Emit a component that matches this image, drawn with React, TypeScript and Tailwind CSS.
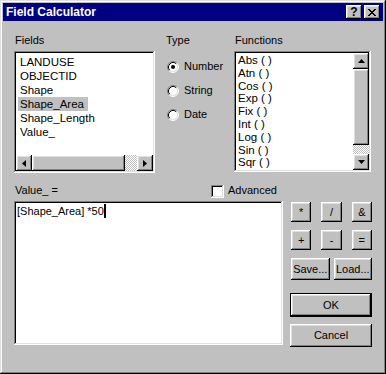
import React from "react";

const raised =
  "bg-[#c0c0c0] shadow-[inset_-1px_-1px_#000,inset_1px_1px_#fff,inset_-2px_-2px_#808080,inset_2px_2px_#dfdfdf]";
const sunken =
  "bg-white shadow-[inset_-1px_-1px_#fff,inset_1px_1px_#808080,inset_-2px_-2px_#dfdfdf,inset_2px_2px_#000]";
const dither =
  "bg-[conic-gradient(#fff_25%,#c0c0c0_0_50%,#fff_0_75%,#c0c0c0_0)] bg-[length:2px_2px]";

const closeGlyph = [
  "XX....XX",
  ".XX..XX.",
  "..XXXX..",
  "...XX...",
  "..XXXX..",
  ".XX..XX.",
  "XX....XX",
];

function CloseIcon() {
  return (
    <svg width="8" height="7" shapeRendering="crispEdges">
      {closeGlyph.map((row, y) =>
        row.split("").map((c, x) =>
          c === "X" ? <rect key={`${x}-${y}`} x={x} y={y} width="1" height="1" fill="#000" /> : null
        )
      )}
    </svg>
  );
}

function Arrow({ dir }: { dir: "left" | "right" | "up" | "down" }) {
  const pts = {
    left: "4,0 0,3.5 4,7",
    right: "0,0 4,3.5 0,7",
    up: "0,4 3.5,0 7,4",
    down: "0,0 7,0 3.5,4",
  }[dir];
  const vertical = dir === "up" || dir === "down";
  return (
    <svg width={vertical ? 7 : 4} height={vertical ? 4 : 7}>
      <polygon points={pts} fill="#000" />
    </svg>
  );
}

function Radio({ checked, label }: { checked?: boolean; label: string }) {
  return (
    <div className="flex items-center h-[13px]">
      <svg width="12" height="12" className="shrink-0">
        <circle cx="6" cy="6" r="5" fill="#fff" />
        <path d="M2.11 9.89 A5.5 5.5 0 0 1 9.89 2.11" stroke="#808080" fill="none" />
        <path d="M9.89 2.11 A5.5 5.5 0 0 1 2.11 9.89" stroke="#fff" fill="none" />
        <path d="M2.82 9.18 A4.5 4.5 0 0 1 9.18 2.82" stroke="#000" fill="none" />
        <path d="M9.18 2.82 A4.5 4.5 0 0 1 2.82 9.18" stroke="#dfdfdf" fill="none" />
        {checked && <circle cx="6" cy="6" r="2" fill="#000" />}
      </svg>
      <span className="ml-[5px]">{label}</span>
    </div>
  );
}

const fields = ["LANDUSE", "OBJECTID", "Shape", "Shape_Area", "Shape_Length", "Value_"];
const functions = ["Abs ( )", "Atn ( )", "Cos ( )", "Exp ( )", "Fix ( )", "Int ( )", "Log ( )", "Sin ( )", "Sqr ( )"];

export default function App() {
  return (
    <div className="w-[386px] h-[374px] bg-[#c0c0c0] p-[3px] flex flex-col text-[11px] leading-[13px] text-black font-['Liberation_Sans',Arial,sans-serif] shadow-[inset_-1px_-1px_#000,inset_1px_1px_#dfdfdf,inset_-2px_-2px_#808080,inset_2px_2px_#fff]">
      {/* Title bar */}
      <div className="h-[18px] bg-[#000080] flex items-center pl-[3px] pr-[3px]">
        <span className="flex-1 text-white font-bold text-[12px]">Field Calculator</span>
        <div className={`${raised} w-[16px] h-[14px] flex items-center justify-center font-bold text-[12px] leading-[12px]`}>
          ?
        </div>
        <div className={`${raised} w-[16px] h-[14px] ml-[2px] flex items-center justify-center`}>
          <CloseIcon />
        </div>
      </div>

      {/* Body */}
      <div className="flex-1 pl-[11px] pr-[11px] pt-[13px]">
        <div className="flex">
          {/* Fields */}
          <div className="w-[141px]">
            <div className="h-[17px] pl-[1px]">Fields</div>
            <div className={`${sunken} h-[122px] p-[2px] flex flex-col`}>
              <div className="flex-1 pt-[2px] leading-[14px] text-[11.5px] overflow-hidden">
                {fields.map((f) => (
                  <div key={f}>
                    <span className={`inline-block ml-[2px] pl-[2px] pr-[4px] ${f === "Shape_Area" ? "bg-[#c0c0c0]" : ""}`}>
                      {f}
                    </span>
                  </div>
                ))}
              </div>
              <div className="h-[16px] flex">
                <div className={`${raised} w-[16px] flex items-center justify-center`}>
                  <Arrow dir="left" />
                </div>
                <div className={`${raised} w-[93px]`} />
                <div className={`${dither} flex-1`} />
                <div className={`${raised} w-[16px] flex items-center justify-center`}>
                  <Arrow dir="right" />
                </div>
              </div>
            </div>
          </div>

          {/* Type */}
          <div className="w-[68px] ml-[11px]">
            <div className="h-[17px]">Type</div>
            <div className="flex flex-col gap-[11px] mt-[9px] pl-[1px]">
              <Radio checked label="Number" />
              <Radio label="String" />
              <Radio label="Date" />
            </div>
          </div>

          {/* Functions */}
          <div className="w-[137px]">
            <div className="h-[17px] pl-[1px]">Functions</div>
            <div className={`${sunken} h-[121px] p-[2px] flex`}>
              <div className="flex-1 pt-[1px] pl-[2px] leading-[12.8px] text-[11.5px] overflow-hidden">
                {functions.map((f) => (
                  <div key={f} className="whitespace-pre">{f}</div>
                ))}
              </div>
              <div className="w-[16px] flex flex-col">
                <div className={`${raised} h-[16px] flex items-center justify-center`}>
                  <Arrow dir="up" />
                </div>
                <div className={`${raised} h-[76px]`} />
                <div className={`${dither} flex-1`} />
                <div className={`${raised} h-[16px] flex items-center justify-center`}>
                  <Arrow dir="down" />
                </div>
              </div>
            </div>
          </div>
        </div>

        {/* Expression */}
        <div className="flex mt-[11px] h-[17px] items-start">
          <div className="w-[197px] pl-[1px]">Value_ =</div>
          <div className={`${sunken} w-[13px] h-[13px] mt-[1px]`} />
          <span className="ml-[4px]">Advanced</span>
        </div>
        <div className="flex">
          <div className={`${sunken} w-[269px] h-[144px] p-[2px] pt-[3px]`}>
            <div className="pl-[1px] flex items-center">
              <span>[Shape_Area] *50</span>
              <span className="inline-block w-[2px] h-[14px] bg-black" />
            </div>
          </div>
          <div className="w-[82px] ml-[7px] pt-[1px] flex flex-col">
            <div className="grid grid-cols-3 gap-x-[10px] gap-y-[8px] pl-[1px]">
              {["*", "/", "&", "+", "-", "="].map((op) => (
                <div key={op} className={`${raised} h-[20px] flex items-center justify-center`}>
                  {op}
                </div>
              ))}
            </div>
            <div className="flex gap-[4px] mt-[8px] pl-[1px]">
              <div className={`${raised} flex-1 h-[22px] flex items-center justify-center`}>Save...</div>
              <div className={`${raised} flex-1 h-[22px] flex items-center justify-center`}>Load...</div>
            </div>
            <div className="mt-[13px] border border-black">
              <div className={`${raised} h-[22px] flex items-center justify-center`}>OK</div>
            </div>
            <div className={`${raised} mt-[7px] h-[23px] flex items-center justify-center`}>Cancel</div>
          </div>
        </div>
      </div>
    </div>
  );
}
